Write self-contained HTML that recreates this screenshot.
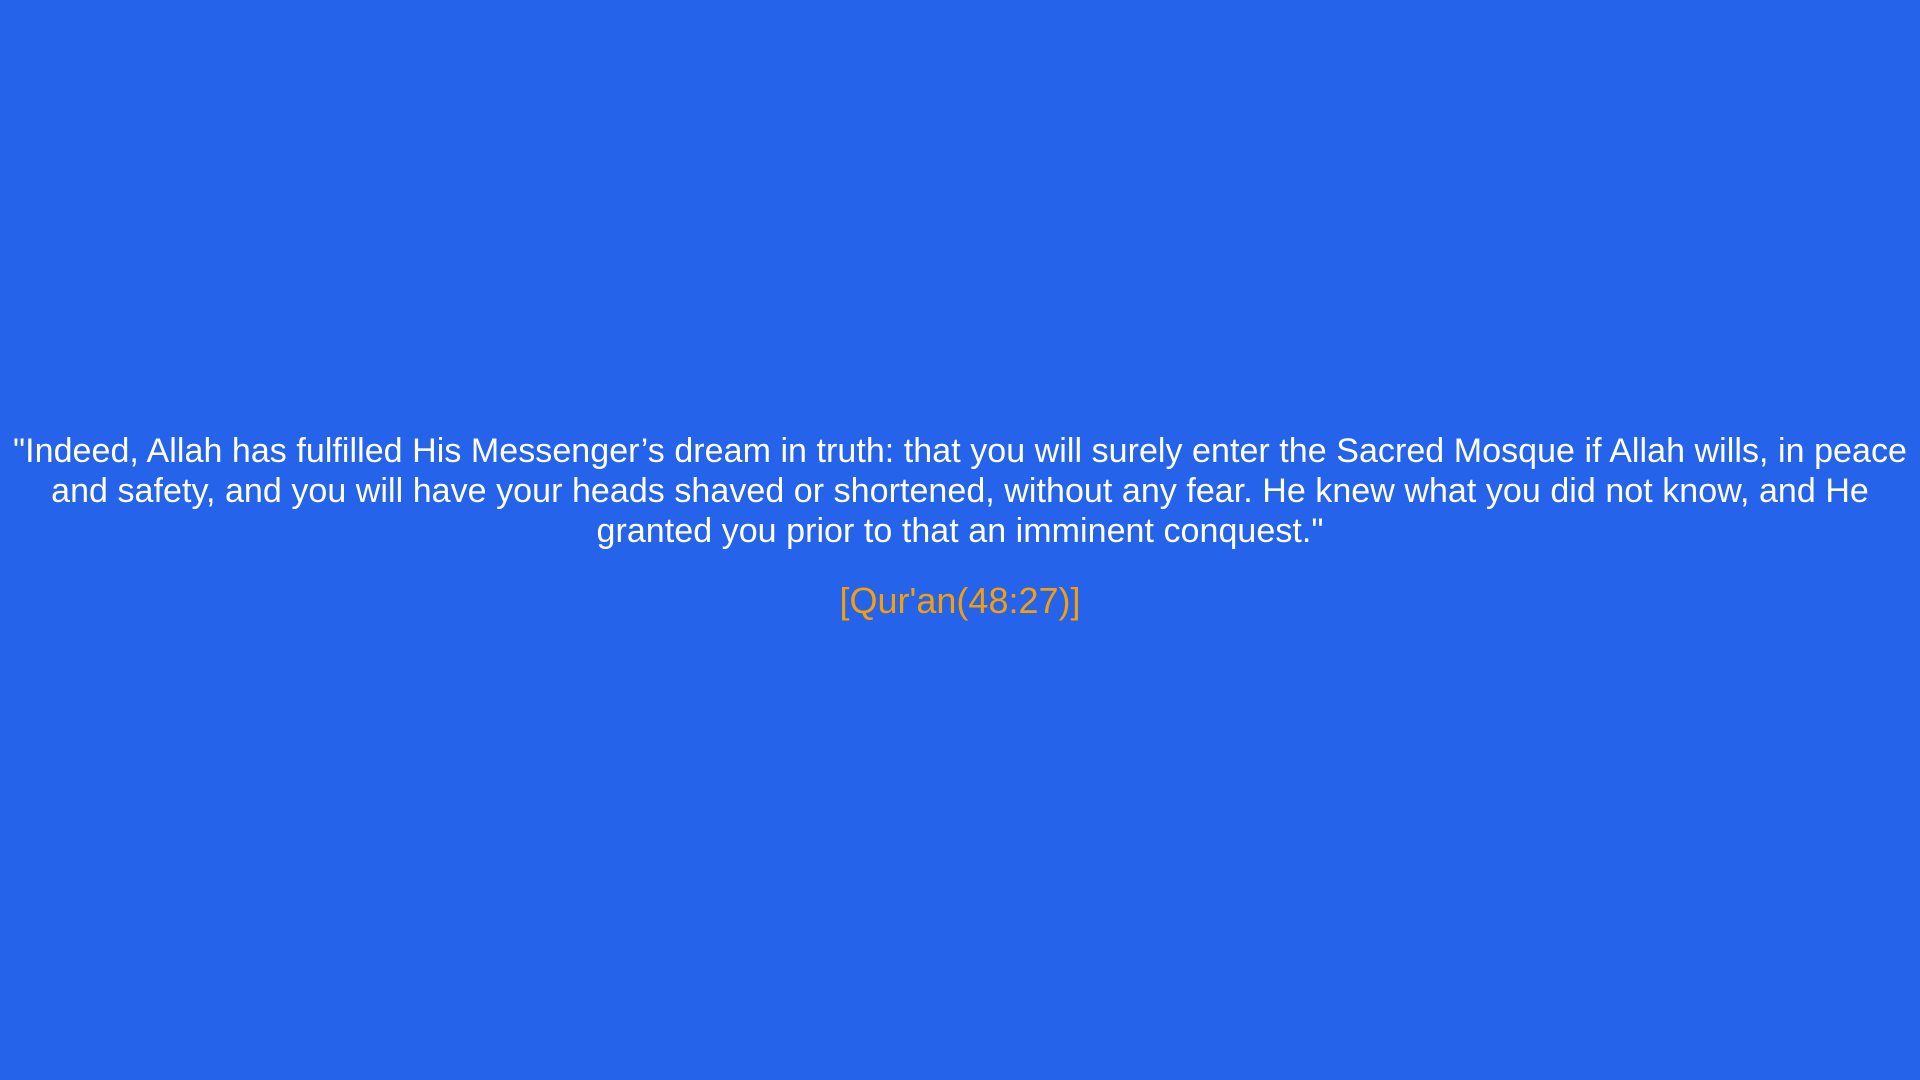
<!DOCTYPE html>
<html><head><meta charset="utf-8"><style>
html,body{margin:0;padding:0;width:1920px;height:1080px;background:#2563eb;overflow:hidden}
.q{position:absolute;left:0;top:431px;width:1920px;text-align:center;color:#fff;font-family:"Liberation Sans",sans-serif;font-size:34px;line-height:40px;letter-spacing:0.05px;white-space:nowrap}
.c{position:absolute;left:0;top:580px;width:1920px;text-align:center;color:#f59e0b;font-family:"Liberation Sans",sans-serif;font-size:36px;line-height:42px}
</style></head><body>
<div class="q">"Indeed, Allah has fulfilled His Messenger’s dream in truth: that you will surely enter the Sacred Mosque if Allah wills, in peace<br>and safety, and you will have your heads shaved or shortened, without any fear. He knew what you did not know, and He<br>granted you prior to that an imminent conquest."</div>
<div class="c">[Qur'an(48:27)]</div>
</body></html>
